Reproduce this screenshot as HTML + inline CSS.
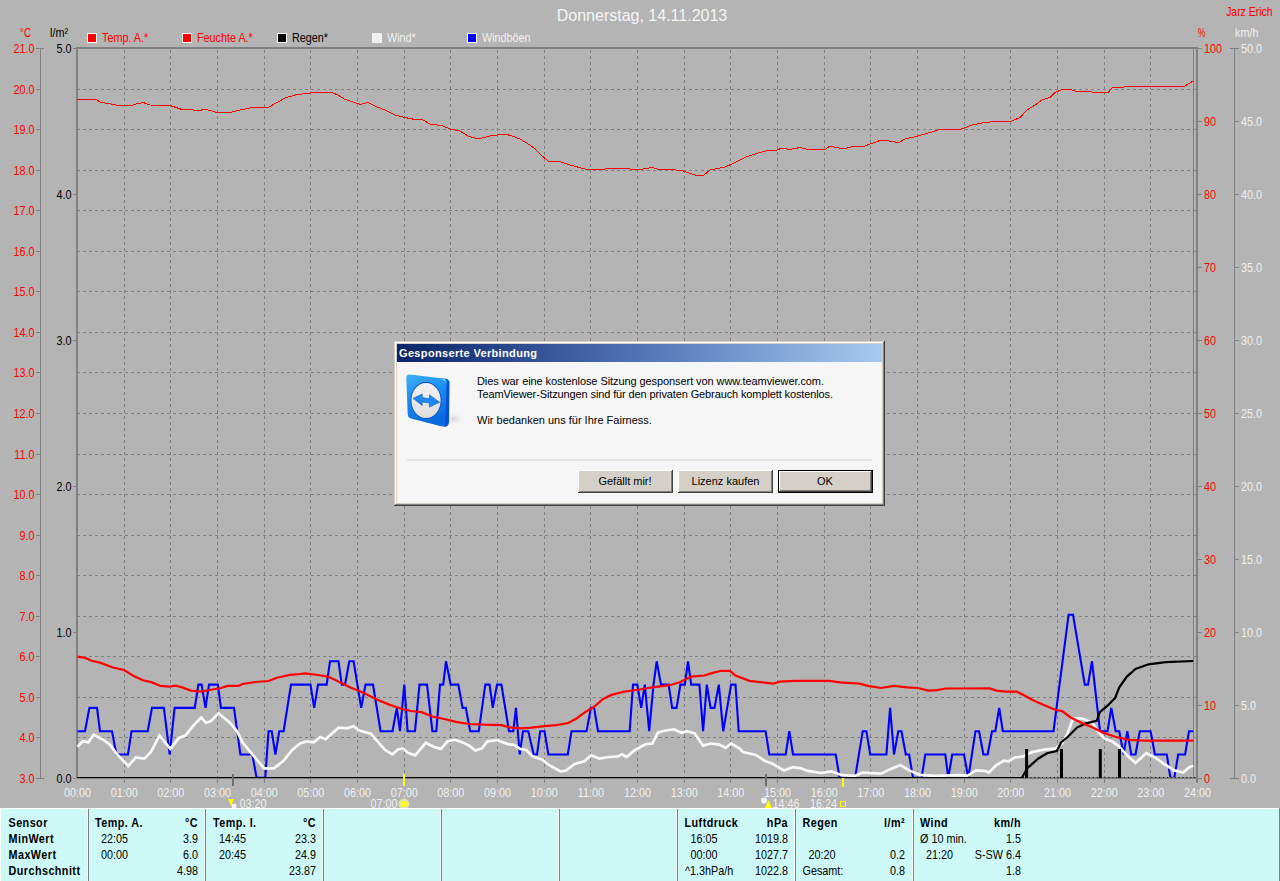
<!DOCTYPE html>
<html><head><meta charset="utf-8"><style>
html,body{margin:0;padding:0;background:#b4b4b4;}
svg{display:block;}
text{font-family:"Liberation Sans", sans-serif;}
</style></head><body>
<svg width="1280" height="881" viewBox="0 0 1280 881">
<rect x="0" y="0" width="1280" height="881" fill="#b4b4b4"/>
<path d="M78 89.5H1193 M78 129.5H1193 M78 170.5H1193 M78 210.5H1193 M78 251.5H1193 M78 291.5H1193 M78 332.5H1193 M78 372.5H1193 M78 413.5H1193 M78 454.5H1193 M78 494.5H1193 M78 535.5H1193 M78 575.5H1193 M78 616.5H1193 M78 656.5H1193 M78 697.5H1193 M78 737.5H1193" stroke="#808080" stroke-width="1" stroke-dasharray="3 3" stroke-dashoffset="1" fill="none"/>
<rect x="1194" y="89" width="2" height="1" fill="#808080"/><rect x="1194" y="129" width="2" height="1" fill="#808080"/><rect x="1194" y="170" width="2" height="1" fill="#808080"/><rect x="1194" y="210" width="2" height="1" fill="#808080"/><rect x="1194" y="251" width="2" height="1" fill="#808080"/><rect x="1194" y="291" width="2" height="1" fill="#808080"/><rect x="1194" y="332" width="2" height="1" fill="#808080"/><rect x="1194" y="372" width="2" height="1" fill="#808080"/><rect x="1194" y="413" width="2" height="1" fill="#808080"/><rect x="1194" y="454" width="2" height="1" fill="#808080"/><rect x="1194" y="494" width="2" height="1" fill="#808080"/><rect x="1194" y="535" width="2" height="1" fill="#808080"/><rect x="1194" y="575" width="2" height="1" fill="#808080"/><rect x="1194" y="616" width="2" height="1" fill="#808080"/><rect x="1194" y="656" width="2" height="1" fill="#808080"/><rect x="1194" y="697" width="2" height="1" fill="#808080"/><rect x="1194" y="737" width="2" height="1" fill="#808080"/>
<path d="M124.5 50V777 M124.5 779V783 M170.5 50V777 M170.5 779V783 M217.5 50V777 M217.5 779V783 M264.5 50V777 M264.5 779V783 M310.5 50V777 M310.5 779V783 M357.5 50V777 M357.5 779V783 M404.5 50V777 M404.5 779V783 M450.5 50V777 M450.5 779V783 M497.5 50V777 M497.5 779V783 M544.5 50V777 M544.5 779V783 M590.5 50V777 M590.5 779V783 M637.5 50V777 M637.5 779V783 M684.5 50V777 M684.5 779V783 M730.5 50V777 M730.5 779V783 M777.5 50V777 M777.5 779V783 M824.5 50V777 M824.5 779V783 M870.5 50V777 M870.5 779V783 M917.5 50V777 M917.5 779V783 M964.5 50V777 M964.5 779V783 M1010.5 50V777 M1010.5 779V783 M1057.5 50V777 M1057.5 779V783 M1104.5 50V777 M1104.5 779V783 M1150.5 50V777 M1150.5 779V783" stroke="#808080" stroke-width="1" stroke-dasharray="3 3" fill="none"/>
<rect x="124" y="779" width="1" height="4" fill="#808080"/><rect x="170" y="779" width="1" height="4" fill="#808080"/><rect x="217" y="779" width="1" height="4" fill="#808080"/><rect x="264" y="779" width="1" height="4" fill="#808080"/><rect x="310" y="779" width="1" height="4" fill="#808080"/><rect x="357" y="779" width="1" height="4" fill="#808080"/><rect x="404" y="779" width="1" height="4" fill="#808080"/><rect x="450" y="779" width="1" height="4" fill="#808080"/><rect x="497" y="779" width="1" height="4" fill="#808080"/><rect x="544" y="779" width="1" height="4" fill="#808080"/><rect x="590" y="779" width="1" height="4" fill="#808080"/><rect x="637" y="779" width="1" height="4" fill="#808080"/><rect x="684" y="779" width="1" height="4" fill="#808080"/><rect x="730" y="779" width="1" height="4" fill="#808080"/><rect x="777" y="779" width="1" height="4" fill="#808080"/><rect x="824" y="779" width="1" height="4" fill="#808080"/><rect x="870" y="779" width="1" height="4" fill="#808080"/><rect x="917" y="779" width="1" height="4" fill="#808080"/><rect x="964" y="779" width="1" height="4" fill="#808080"/><rect x="1010" y="779" width="1" height="4" fill="#808080"/><rect x="1057" y="779" width="1" height="4" fill="#808080"/><rect x="1104" y="779" width="1" height="4" fill="#808080"/><rect x="1150" y="779" width="1" height="4" fill="#808080"/>
<rect x="76" y="47" width="1122" height="2" fill="#808080"/>
<rect x="76" y="47" width="2" height="731" fill="#808080"/>
<rect x="1196" y="47" width="2" height="736" fill="#808080"/>
<rect x="1193" y="48" width="1" height="730" fill="#808080"/>
<rect x="40" y="48" width="1" height="731" fill="#808080"/>
<rect x="36" y="48" width="8" height="1" fill="#808080"/><rect x="36" y="89" width="4" height="1" fill="#808080"/><rect x="36" y="129" width="4" height="1" fill="#808080"/><rect x="36" y="170" width="4" height="1" fill="#808080"/><rect x="36" y="210" width="4" height="1" fill="#808080"/><rect x="36" y="251" width="4" height="1" fill="#808080"/><rect x="36" y="291" width="4" height="1" fill="#808080"/><rect x="36" y="332" width="4" height="1" fill="#808080"/><rect x="36" y="372" width="4" height="1" fill="#808080"/><rect x="36" y="413" width="4" height="1" fill="#808080"/><rect x="36" y="454" width="4" height="1" fill="#808080"/><rect x="36" y="494" width="4" height="1" fill="#808080"/><rect x="36" y="535" width="4" height="1" fill="#808080"/><rect x="36" y="575" width="4" height="1" fill="#808080"/><rect x="36" y="616" width="4" height="1" fill="#808080"/><rect x="36" y="656" width="4" height="1" fill="#808080"/><rect x="36" y="697" width="4" height="1" fill="#808080"/><rect x="36" y="737" width="4" height="1" fill="#808080"/><rect x="36" y="778" width="8" height="1" fill="#808080"/>
<rect x="1234" y="48" width="1" height="731" fill="#808080"/>
<rect x="73" y="48" width="3" height="1" fill="#808080"/><rect x="73" y="194" width="3" height="1" fill="#808080"/><rect x="73" y="340" width="3" height="1" fill="#808080"/><rect x="73" y="486" width="3" height="1" fill="#808080"/><rect x="73" y="632" width="3" height="1" fill="#808080"/><rect x="73" y="778" width="3" height="1" fill="#808080"/><rect x="1198" y="48" width="4" height="1" fill="#808080"/><rect x="1198" y="121" width="4" height="1" fill="#808080"/><rect x="1198" y="194" width="4" height="1" fill="#808080"/><rect x="1198" y="267" width="4" height="1" fill="#808080"/><rect x="1198" y="340" width="4" height="1" fill="#808080"/><rect x="1198" y="413" width="4" height="1" fill="#808080"/><rect x="1198" y="486" width="4" height="1" fill="#808080"/><rect x="1198" y="559" width="4" height="1" fill="#808080"/><rect x="1198" y="632" width="4" height="1" fill="#808080"/><rect x="1198" y="705" width="4" height="1" fill="#808080"/><rect x="1198" y="778" width="4" height="1" fill="#808080"/><rect x="1230" y="48" width="9" height="1" fill="#808080"/><rect x="1235" y="121" width="4" height="1" fill="#808080"/><rect x="1235" y="194" width="4" height="1" fill="#808080"/><rect x="1235" y="267" width="4" height="1" fill="#808080"/><rect x="1235" y="340" width="4" height="1" fill="#808080"/><rect x="1235" y="413" width="4" height="1" fill="#808080"/><rect x="1235" y="486" width="4" height="1" fill="#808080"/><rect x="1235" y="559" width="4" height="1" fill="#808080"/><rect x="1235" y="632" width="4" height="1" fill="#808080"/><rect x="1235" y="705" width="4" height="1" fill="#808080"/><rect x="1230" y="778" width="9" height="1" fill="#808080"/>
<text transform="translate(34.5 53) scale(0.9 1)" fill="#ff0000" font-size="12" font-weight="normal" text-anchor="end" >21.0</text><text transform="translate(34.5 94) scale(0.9 1)" fill="#ff0000" font-size="12" font-weight="normal" text-anchor="end" >20.0</text><text transform="translate(34.5 134) scale(0.9 1)" fill="#ff0000" font-size="12" font-weight="normal" text-anchor="end" >19.0</text><text transform="translate(34.5 175) scale(0.9 1)" fill="#ff0000" font-size="12" font-weight="normal" text-anchor="end" >18.0</text><text transform="translate(34.5 215) scale(0.9 1)" fill="#ff0000" font-size="12" font-weight="normal" text-anchor="end" >17.0</text><text transform="translate(34.5 256) scale(0.9 1)" fill="#ff0000" font-size="12" font-weight="normal" text-anchor="end" >16.0</text><text transform="translate(34.5 296) scale(0.9 1)" fill="#ff0000" font-size="12" font-weight="normal" text-anchor="end" >15.0</text><text transform="translate(34.5 337) scale(0.9 1)" fill="#ff0000" font-size="12" font-weight="normal" text-anchor="end" >14.0</text><text transform="translate(34.5 377) scale(0.9 1)" fill="#ff0000" font-size="12" font-weight="normal" text-anchor="end" >13.0</text><text transform="translate(34.5 418) scale(0.9 1)" fill="#ff0000" font-size="12" font-weight="normal" text-anchor="end" >12.0</text><text transform="translate(34.5 459) scale(0.9 1)" fill="#ff0000" font-size="12" font-weight="normal" text-anchor="end" >11.0</text><text transform="translate(34.5 499) scale(0.9 1)" fill="#ff0000" font-size="12" font-weight="normal" text-anchor="end" >10.0</text><text transform="translate(34.5 540) scale(0.9 1)" fill="#ff0000" font-size="12" font-weight="normal" text-anchor="end" >9.0</text><text transform="translate(34.5 580) scale(0.9 1)" fill="#ff0000" font-size="12" font-weight="normal" text-anchor="end" >8.0</text><text transform="translate(34.5 621) scale(0.9 1)" fill="#ff0000" font-size="12" font-weight="normal" text-anchor="end" >7.0</text><text transform="translate(34.5 661) scale(0.9 1)" fill="#ff0000" font-size="12" font-weight="normal" text-anchor="end" >6.0</text><text transform="translate(34.5 702) scale(0.9 1)" fill="#ff0000" font-size="12" font-weight="normal" text-anchor="end" >5.0</text><text transform="translate(34.5 742) scale(0.9 1)" fill="#ff0000" font-size="12" font-weight="normal" text-anchor="end" >4.0</text><text transform="translate(34.5 783) scale(0.9 1)" fill="#ff0000" font-size="12" font-weight="normal" text-anchor="end" >3.0</text><text transform="translate(71.5 53) scale(0.9 1)" fill="#000000" font-size="12" font-weight="normal" text-anchor="end" >5.0</text><text transform="translate(71.5 199) scale(0.9 1)" fill="#000000" font-size="12" font-weight="normal" text-anchor="end" >4.0</text><text transform="translate(71.5 345) scale(0.9 1)" fill="#000000" font-size="12" font-weight="normal" text-anchor="end" >3.0</text><text transform="translate(71.5 491) scale(0.9 1)" fill="#000000" font-size="12" font-weight="normal" text-anchor="end" >2.0</text><text transform="translate(71.5 637) scale(0.9 1)" fill="#000000" font-size="12" font-weight="normal" text-anchor="end" >1.0</text><text transform="translate(71.5 783) scale(0.9 1)" fill="#000000" font-size="12" font-weight="normal" text-anchor="end" >0.0</text><text transform="translate(1204 53) scale(0.9 1)" fill="#ff0000" font-size="12" font-weight="normal" text-anchor="start" >100</text><text transform="translate(1241 53) scale(0.9 1)" fill="#f0f0f0" font-size="12" font-weight="normal" text-anchor="start" >50.0</text><text transform="translate(1204 126) scale(0.9 1)" fill="#ff0000" font-size="12" font-weight="normal" text-anchor="start" >90</text><text transform="translate(1241 126) scale(0.9 1)" fill="#f0f0f0" font-size="12" font-weight="normal" text-anchor="start" >45.0</text><text transform="translate(1204 199) scale(0.9 1)" fill="#ff0000" font-size="12" font-weight="normal" text-anchor="start" >80</text><text transform="translate(1241 199) scale(0.9 1)" fill="#f0f0f0" font-size="12" font-weight="normal" text-anchor="start" >40.0</text><text transform="translate(1204 272) scale(0.9 1)" fill="#ff0000" font-size="12" font-weight="normal" text-anchor="start" >70</text><text transform="translate(1241 272) scale(0.9 1)" fill="#f0f0f0" font-size="12" font-weight="normal" text-anchor="start" >35.0</text><text transform="translate(1204 345) scale(0.9 1)" fill="#ff0000" font-size="12" font-weight="normal" text-anchor="start" >60</text><text transform="translate(1241 345) scale(0.9 1)" fill="#f0f0f0" font-size="12" font-weight="normal" text-anchor="start" >30.0</text><text transform="translate(1204 418) scale(0.9 1)" fill="#ff0000" font-size="12" font-weight="normal" text-anchor="start" >50</text><text transform="translate(1241 418) scale(0.9 1)" fill="#f0f0f0" font-size="12" font-weight="normal" text-anchor="start" >25.0</text><text transform="translate(1204 491) scale(0.9 1)" fill="#ff0000" font-size="12" font-weight="normal" text-anchor="start" >40</text><text transform="translate(1241 491) scale(0.9 1)" fill="#f0f0f0" font-size="12" font-weight="normal" text-anchor="start" >20.0</text><text transform="translate(1204 564) scale(0.9 1)" fill="#ff0000" font-size="12" font-weight="normal" text-anchor="start" >30</text><text transform="translate(1241 564) scale(0.9 1)" fill="#f0f0f0" font-size="12" font-weight="normal" text-anchor="start" >15.0</text><text transform="translate(1204 637) scale(0.9 1)" fill="#ff0000" font-size="12" font-weight="normal" text-anchor="start" >20</text><text transform="translate(1241 637) scale(0.9 1)" fill="#f0f0f0" font-size="12" font-weight="normal" text-anchor="start" >10.0</text><text transform="translate(1204 710) scale(0.9 1)" fill="#ff0000" font-size="12" font-weight="normal" text-anchor="start" >10</text><text transform="translate(1241 710) scale(0.9 1)" fill="#f0f0f0" font-size="12" font-weight="normal" text-anchor="start" >5.0</text><text transform="translate(1204 783) scale(0.9 1)" fill="#ff0000" font-size="12" font-weight="normal" text-anchor="start" >0</text><text transform="translate(1241 783) scale(0.9 1)" fill="#f0f0f0" font-size="12" font-weight="normal" text-anchor="start" >0.0</text><text transform="translate(20 37) scale(0.82 1)" fill="#ff0000" font-size="12" font-weight="normal" text-anchor="start" >°C</text><text transform="translate(50 37) scale(0.9 1)" fill="#000000" font-size="12" font-weight="normal" text-anchor="start" >l/m²</text><text transform="translate(1198 37) scale(0.7 1)" fill="#ff0000" font-size="12" font-weight="normal" text-anchor="start" >%</text><text transform="translate(1235 37) scale(0.9 1)" fill="#f0f0f0" font-size="12" font-weight="normal" text-anchor="start" >km/h</text><text transform="translate(1272.5 16) scale(0.87 1)" fill="#ff0000" font-size="12" font-weight="normal" text-anchor="end" >Jarz Erich</text><text transform="translate(642 21) scale(1 1)" fill="#f4f4f4" font-size="16" font-weight="normal" text-anchor="middle" >Donnerstag, 14.11.2013</text><text transform="translate(77.5 797) scale(0.9 1)" fill="#f0f0f0" font-size="12" font-weight="normal" text-anchor="middle" >00:00</text><text transform="translate(124.167 797) scale(0.9 1)" fill="#f0f0f0" font-size="12" font-weight="normal" text-anchor="middle" >01:00</text><text transform="translate(170.834 797) scale(0.9 1)" fill="#f0f0f0" font-size="12" font-weight="normal" text-anchor="middle" >02:00</text><text transform="translate(217.501 797) scale(0.9 1)" fill="#f0f0f0" font-size="12" font-weight="normal" text-anchor="middle" >03:00</text><text transform="translate(264.168 797) scale(0.9 1)" fill="#f0f0f0" font-size="12" font-weight="normal" text-anchor="middle" >04:00</text><text transform="translate(310.83500000000004 797) scale(0.9 1)" fill="#f0f0f0" font-size="12" font-weight="normal" text-anchor="middle" >05:00</text><text transform="translate(357.502 797) scale(0.9 1)" fill="#f0f0f0" font-size="12" font-weight="normal" text-anchor="middle" >06:00</text><text transform="translate(404.169 797) scale(0.9 1)" fill="#f0f0f0" font-size="12" font-weight="normal" text-anchor="middle" >07:00</text><text transform="translate(450.836 797) scale(0.9 1)" fill="#f0f0f0" font-size="12" font-weight="normal" text-anchor="middle" >08:00</text><text transform="translate(497.50300000000004 797) scale(0.9 1)" fill="#f0f0f0" font-size="12" font-weight="normal" text-anchor="middle" >09:00</text><text transform="translate(544.1700000000001 797) scale(0.9 1)" fill="#f0f0f0" font-size="12" font-weight="normal" text-anchor="middle" >10:00</text><text transform="translate(590.837 797) scale(0.9 1)" fill="#f0f0f0" font-size="12" font-weight="normal" text-anchor="middle" >11:00</text><text transform="translate(637.504 797) scale(0.9 1)" fill="#f0f0f0" font-size="12" font-weight="normal" text-anchor="middle" >12:00</text><text transform="translate(684.171 797) scale(0.9 1)" fill="#f0f0f0" font-size="12" font-weight="normal" text-anchor="middle" >13:00</text><text transform="translate(730.838 797) scale(0.9 1)" fill="#f0f0f0" font-size="12" font-weight="normal" text-anchor="middle" >14:00</text><text transform="translate(777.505 797) scale(0.9 1)" fill="#f0f0f0" font-size="12" font-weight="normal" text-anchor="middle" >15:00</text><text transform="translate(824.172 797) scale(0.9 1)" fill="#f0f0f0" font-size="12" font-weight="normal" text-anchor="middle" >16:00</text><text transform="translate(870.839 797) scale(0.9 1)" fill="#f0f0f0" font-size="12" font-weight="normal" text-anchor="middle" >17:00</text><text transform="translate(917.5060000000001 797) scale(0.9 1)" fill="#f0f0f0" font-size="12" font-weight="normal" text-anchor="middle" >18:00</text><text transform="translate(964.173 797) scale(0.9 1)" fill="#f0f0f0" font-size="12" font-weight="normal" text-anchor="middle" >19:00</text><text transform="translate(1010.84 797) scale(0.9 1)" fill="#f0f0f0" font-size="12" font-weight="normal" text-anchor="middle" >20:00</text><text transform="translate(1057.507 797) scale(0.9 1)" fill="#f0f0f0" font-size="12" font-weight="normal" text-anchor="middle" >21:00</text><text transform="translate(1104.174 797) scale(0.9 1)" fill="#f0f0f0" font-size="12" font-weight="normal" text-anchor="middle" >22:00</text><text transform="translate(1150.8410000000001 797) scale(0.9 1)" fill="#f0f0f0" font-size="12" font-weight="normal" text-anchor="middle" >23:00</text><text transform="translate(1197.508 797) scale(0.9 1)" fill="#f0f0f0" font-size="12" font-weight="normal" text-anchor="middle" >24:00</text><rect x="87" y="33" width="10" height="10" fill="#ffffff"/><rect x="88" y="34" width="8" height="8" fill="#ff0000"/><text transform="translate(102 42) scale(0.9 1)" fill="#ff0000" font-size="12" font-weight="normal" text-anchor="start" >Temp. A.*</text><rect x="182" y="33" width="10" height="10" fill="#ffffff"/><rect x="183" y="34" width="8" height="8" fill="#ff0000"/><text transform="translate(197 42) scale(0.9 1)" fill="#ff0000" font-size="12" font-weight="normal" text-anchor="start" >Feuchte A.*</text><rect x="277" y="33" width="10" height="10" fill="#ffffff"/><rect x="278" y="34" width="8" height="8" fill="#000000"/><text transform="translate(292 42) scale(0.9 1)" fill="#000000" font-size="12" font-weight="normal" text-anchor="start" >Regen*</text><rect x="372" y="33" width="10" height="10" fill="#f0f0f0"/><text transform="translate(387 42) scale(0.9 1)" fill="#f0f0f0" font-size="12" font-weight="normal" text-anchor="start" >Wind*</text><rect x="467" y="33" width="10" height="10" fill="#ffffff"/><rect x="468" y="34" width="8" height="8" fill="#0000ff"/><text transform="translate(482 42) scale(0.9 1)" fill="#f0f0f0" font-size="12" font-weight="normal" text-anchor="start" >Windböen</text>
<path d="M77.0 99.5 L96.0 99.5 L100.0 102.0 L116.0 105.0 L130.0 106.0 L136.0 104.0 L143.0 102.5 L150.0 105.0 L170.0 105.5 L182.0 109.5 L190.0 109.5 L198.0 111.0 L205.0 109.0 L215.0 112.0 L228.0 113.0 L240.0 110.0 L250.0 108.0 L268.0 107.5 L277.0 102.5 L285.0 98.0 L295.0 95.0 L310.0 93.0 L332.0 92.5 L338.0 95.0 L345.0 99.5 L355.0 102.5 L360.0 104.5 L368.0 102.5 L377.0 107.0 L385.0 110.0 L395.0 115.0 L405.0 117.5 L415.0 119.5 L422.0 119.5 L430.0 124.0 L443.0 126.0 L450.0 129.0 L460.0 131.0 L468.0 136.0 L478.0 139.0 L490.0 136.0 L505.0 134.0 L512.0 136.0 L520.0 139.0 L530.0 145.0 L535.0 149.0 L540.0 154.0 L548.0 161.0 L558.0 161.0 L570.0 165.0 L585.0 169.0 L600.0 170.0 L610.0 168.0 L640.0 169.5 L652.0 167.5 L660.0 170.0 L672.0 169.5 L683.0 171.0 L695.0 175.0 L703.0 176.0 L710.0 170.0 L725.0 167.0 L735.0 162.5 L745.0 157.5 L755.0 154.0 L760.0 152.5 L770.0 150.0 L777.0 150.0 L782.0 148.0 L790.0 149.5 L800.0 147.5 L808.0 149.5 L825.0 149.5 L830.0 146.0 L843.0 149.0 L855.0 146.0 L865.0 146.0 L870.0 144.0 L880.0 140.5 L883.0 140.0 L895.0 142.0 L900.0 142.0 L905.0 139.0 L918.0 136.0 L930.0 132.5 L940.0 129.5 L960.0 129.5 L972.0 125.0 L985.0 122.5 L1000.0 121.0 L1012.0 121.0 L1020.0 117.5 L1027.0 110.0 L1035.0 105.0 L1042.0 100.0 L1050.0 97.5 L1055.0 92.5 L1062.0 89.5 L1070.0 89.5 L1075.0 91.0 L1100.0 92.5 L1108.0 92.5 L1112.0 88.0 L1137.0 86.0 L1185.0 86.0 L1193.0 81.0" stroke="#ff0000" stroke-width="1" fill="none" stroke-linejoin="miter" stroke-linecap="butt" shape-rendering="crispEdges"/>
<path d="M77.5 731.2 L85.0 731.2 L89.4 707.9 L97.0 707.9 L100.0 731.2 L112.0 731.2 L116.4 754.5 L128.0 754.5 L131.5 731.2 L147.7 731.2 L152.0 707.9 L163.9 707.9 L169.7 754.5 L174.6 707.9 L194.7 707.9 L198.4 684.6 L201.6 684.6 L205.5 707.9 L209.0 684.6 L217.8 684.6 L221.0 707.9 L234.0 707.9 L240.4 754.5 L252.3 754.5 L256.6 777.8 L265.3 777.8 L268.5 731.2 L271.7 731.2 L275.4 754.5 L279.3 731.2 L283.6 731.2 L291.0 684.6 L310.5 684.6 L314.2 707.9 L318.0 684.6 L326.7 684.6 L330.0 661.3 L338.5 661.3 L341.8 684.6 L345.0 684.6 L349.3 661.3 L353.6 661.3 L361.2 707.9 L365.5 684.6 L373.0 684.6 L380.6 731.2 L392.5 731.2 L396.8 707.9 L400.0 731.2 L404.3 684.6 L407.6 731.2 L415.0 731.2 L419.5 684.6 L427.0 684.6 L432.4 731.2 L436.3 731.2 L440.0 684.6 L443.2 684.6 L446.0 661.3 L450.7 684.6 L458.3 684.6 L462.6 707.9 L465.8 707.9 L470.2 731.2 L478.8 731.2 L485.3 684.6 L489.6 684.6 L492.8 707.9 L497.0 684.6 L501.4 684.6 L509.0 731.2 L513.3 731.2 L516.0 707.9 L519.7 754.5 L523.0 731.2 L528.3 731.2 L533.7 754.5 L537.0 754.5 L540.2 731.2 L544.5 731.2 L548.4 754.5 L567.8 754.5 L571.5 731.2 L586.6 731.2 L590.9 707.9 L594.1 707.9 L598.0 731.2 L629.7 731.2 L633.0 684.6 L637.3 684.6 L641.2 707.9 L644.8 684.6 L649.2 731.2 L653.5 684.6 L656.7 661.3 L661.0 684.6 L668.6 684.6 L672.2 707.9 L676.6 707.9 L680.4 684.6 L684.8 684.6 L688.0 661.3 L691.2 684.6 L699.4 684.6 L703.1 731.2 L706.8 684.6 L710.6 707.9 L714.5 707.9 L718.8 684.6 L723.2 731.2 L731.1 684.6 L735.5 684.6 L738.7 731.2 L765.6 731.2 L769.3 754.5 L785.7 754.5 L789.3 731.2 L793.0 754.5 L835.7 754.5 L839.6 777.8 L855.1 777.8 L862.7 731.2 L866.4 731.2 L870.2 754.5 L886.4 754.5 L890.1 707.9 L894.0 754.5 L898.3 731.2 L901.5 731.2 L905.8 754.5 L909.1 754.5 L913.0 777.8 L921.6 777.8 L925.3 754.5 L945.3 754.5 L948.3 777.8 L952.2 754.5 L964.0 754.5 L968.3 777.8 L975.5 731.2 L979.1 731.2 L983.4 754.5 L987.7 754.5 L992.0 731.2 L995.3 731.2 L999.2 707.9 L1002.8 731.2 L1053.5 731.2 L1068.6 614.7 L1073.0 614.7 L1084.8 684.6 L1088.0 684.6 L1092.0 661.3 L1100.0 731.2 L1107.5 731.2 L1111.3 707.9 L1115.7 731.2 L1119.3 731.2 L1123.6 754.5 L1127.3 731.2 L1131.2 754.5 L1135.5 754.5 L1139.8 731.2 L1150.6 731.2 L1154.9 754.5 L1166.8 754.5 L1170.4 777.8 L1174.3 777.8 L1178.2 754.5 L1185.1 754.5 L1189.0 731.2 L1193.3 731.2" stroke="#0000ff" stroke-width="2.1" fill="none" stroke-linejoin="miter" stroke-linecap="butt" />
<path d="M77.5 746.7 L83.0 741.3 L88.3 742.4 L93.7 734.8 L102.4 739.2 L110.0 744.6 L116.4 753.6 L128.3 766.0 L135.8 757.5 L144.4 758.6 L150.9 752.0 L159.5 735.5 L170.3 748.9 L179.0 738.0 L185.4 735.5 L193.0 726.0 L201.2 717.6 L206.0 723.0 L211.3 720.8 L218.4 713.3 L229.7 722.5 L237.2 731.6 L242.6 742.4 L251.2 753.2 L264.2 768.3 L273.9 768.3 L283.6 760.7 L292.2 750.0 L300.0 743.5 L307.3 741.3 L313.7 742.4 L320.2 737.0 L325.6 739.2 L338.5 727.7 L347.2 728.4 L353.6 726.2 L359.0 730.5 L371.0 733.8 L376.3 740.2 L385.0 750.0 L392.5 754.3 L397.9 749.5 L403.3 748.4 L407.6 752.7 L415.1 755.3 L425.9 742.8 L433.5 746.7 L441.0 748.9 L447.5 741.3 L455.0 739.8 L462.6 742.4 L469.0 745.6 L475.5 750.6 L482.0 748.4 L487.4 741.3 L497.1 740.2 L507.9 744.1 L514.4 745.0 L520.0 748.9 L526.2 750.0 L532.7 756.4 L542.4 759.7 L548.8 765.0 L560.7 771.5 L566.1 770.4 L574.7 764.0 L584.4 761.4 L590.9 755.3 L599.5 758.6 L609.2 757.0 L617.9 756.4 L622.2 754.3 L626.5 757.0 L635.1 750.0 L645.9 744.1 L652.4 743.5 L657.8 732.7 L665.3 730.5 L674.0 729.4 L681.5 732.7 L686.9 731.2 L694.5 733.3 L703.1 745.6 L710.6 743.5 L719.3 744.6 L725.7 747.8 L731.1 743.5 L740.0 748.9 L743.0 752.1 L755.9 754.9 L764.5 760.7 L773.1 764.0 L783.9 770.4 L792.6 767.2 L801.2 768.3 L807.7 770.9 L820.6 773.0 L831.4 771.5 L842.2 775.2 L855.1 775.8 L862.7 772.6 L881.0 773.7 L889.7 769.4 L900.4 765.0 L909.1 770.4 L919.9 774.8 L935.0 775.8 L960.0 775.2 L967.3 775.8 L975.9 770.4 L984.5 770.8 L988.8 772.6 L996.4 765.0 L1003.9 760.7 L1008.2 761.3 L1014.7 757.5 L1023.3 756.4 L1032.0 752.1 L1042.8 749.9 L1055.7 748.4 L1062.2 743.4 L1067.6 733.7 L1073.0 718.6 L1079.4 718.2 L1085.9 719.7 L1092.4 723.0 L1098.8 732.7 L1105.3 739.1 L1111.8 741.3 L1118.2 745.6 L1126.9 755.3 L1135.5 762.9 L1146.3 753.2 L1154.9 757.5 L1165.7 765.0 L1174.3 770.4 L1183.0 772.6 L1189.4 767.2 L1193.3 765.7" stroke="#f8f8f8" stroke-width="2.7" fill="none" stroke-linejoin="miter" stroke-linecap="butt" />
<rect x="77" y="777" width="1120" height="2" fill="#808080"/><rect x="77" y="777" width="947" height="1" fill="#000000"/>
<rect x="1026.5" y="777" width="1" height="1" fill="#000"/><rect x="1030.4" y="777" width="1" height="1" fill="#000"/><rect x="1034.3" y="777" width="1" height="1" fill="#000"/><rect x="1038.2" y="777" width="1" height="1" fill="#000"/><rect x="1042.1" y="777" width="1" height="1" fill="#000"/><rect x="1046.0" y="777" width="1" height="1" fill="#000"/><rect x="1049.9" y="777" width="1" height="1" fill="#000"/><rect x="1053.8" y="777" width="1" height="1" fill="#000"/><rect x="1057.7" y="777" width="1" height="1" fill="#000"/><rect x="1061.6" y="777" width="1" height="1" fill="#000"/><rect x="1065.5" y="777" width="1" height="1" fill="#000"/><rect x="1069.4" y="777" width="1" height="1" fill="#000"/><rect x="1073.3" y="777" width="1" height="1" fill="#000"/><rect x="1077.2" y="777" width="1" height="1" fill="#000"/><rect x="1081.1" y="777" width="1" height="1" fill="#000"/><rect x="1085.0" y="777" width="1" height="1" fill="#000"/><rect x="1088.9" y="777" width="1" height="1" fill="#000"/><rect x="1092.8" y="777" width="1" height="1" fill="#000"/><rect x="1096.7" y="777" width="1" height="1" fill="#000"/><rect x="1100.6" y="777" width="1" height="1" fill="#000"/><rect x="1104.5" y="777" width="1" height="1" fill="#000"/><rect x="1108.4" y="777" width="1" height="1" fill="#000"/><rect x="1112.3" y="777" width="1" height="1" fill="#000"/><rect x="1116.2" y="777" width="1" height="1" fill="#000"/><rect x="1120.1" y="777" width="1" height="1" fill="#000"/><rect x="1124.0" y="777" width="1" height="1" fill="#000"/><rect x="1127.9" y="777" width="1" height="1" fill="#000"/><rect x="1131.8" y="777" width="1" height="1" fill="#000"/><rect x="1135.7" y="777" width="1" height="1" fill="#000"/><rect x="1139.6" y="777" width="1" height="1" fill="#000"/><rect x="1143.5" y="777" width="1" height="1" fill="#000"/><rect x="1147.4" y="777" width="1" height="1" fill="#000"/><rect x="1151.3" y="777" width="1" height="1" fill="#000"/><rect x="1155.2" y="777" width="1" height="1" fill="#000"/><rect x="1159.1" y="777" width="1" height="1" fill="#000"/><rect x="1163.0" y="777" width="1" height="1" fill="#000"/><rect x="1166.9" y="777" width="1" height="1" fill="#000"/><rect x="1170.8" y="777" width="1" height="1" fill="#000"/><rect x="1174.7" y="777" width="1" height="1" fill="#000"/><rect x="1178.6" y="777" width="1" height="1" fill="#000"/><rect x="1182.5" y="777" width="1" height="1" fill="#000"/><rect x="1186.4" y="777" width="1" height="1" fill="#000"/><rect x="1190.3" y="777" width="1" height="1" fill="#000"/><rect x="1194.2" y="777" width="1" height="1" fill="#000"/>
<path d="M1022.0 777.5 L1027.7 767.8 L1038.4 758.5 L1047.1 753.2 L1056.8 751.0 L1061.1 742.4 L1067.6 737.0 L1077.3 727.3 L1085.9 723.4 L1096.7 720.8 L1099.9 712.2 L1107.5 705.7 L1115.0 698.1 L1119.3 687.4 L1126.9 676.6 L1135.5 669.0 L1148.5 664.3 L1165.7 662.1 L1193.3 661.0" stroke="#000000" stroke-width="2.2" fill="none" stroke-linejoin="miter" stroke-linecap="butt" />
<rect x="1025.1" y="749" width="3" height="29" fill="#000"/>
<rect x="1060.0" y="749" width="3" height="29" fill="#000"/>
<rect x="1098.8" y="749" width="3" height="29" fill="#000"/>
<rect x="1118.0" y="749" width="3" height="29" fill="#000"/>
<path d="M77.5 656.7 L85.0 657.8 L91.6 660.8 L100.0 662.6 L113.0 667.5 L124.0 670.0 L134.7 676.6 L143.0 680.3 L152.0 682.4 L160.6 685.9 L169.2 686.7 L175.7 685.7 L182.2 687.4 L190.8 690.6 L201.6 691.7 L212.4 689.5 L221.0 688.0 L227.5 685.9 L238.3 685.9 L242.6 684.0 L255.5 682.0 L268.5 681.0 L277.0 677.7 L290.0 674.9 L300.0 674.0 L305.0 673.4 L318.0 675.0 L327.8 676.6 L337.5 681.0 L350.4 687.4 L363.4 692.8 L376.3 699.2 L389.2 704.6 L402.2 709.0 L410.8 711.0 L421.6 712.2 L432.4 716.5 L445.3 719.3 L456.1 721.9 L469.0 724.0 L484.2 724.7 L501.4 725.1 L510.0 727.3 L520.8 728.4 L531.6 727.7 L544.5 726.2 L556.4 725.1 L568.3 723.0 L576.9 718.2 L585.5 711.8 L594.1 706.8 L602.8 699.2 L611.4 694.9 L624.3 691.7 L639.4 689.5 L652.4 687.4 L669.7 685.2 L680.4 682.0 L691.2 676.6 L704.2 675.5 L712.8 672.9 L721.4 670.8 L730.0 670.8 L735.5 675.5 L749.4 680.9 L762.4 682.4 L773.1 683.7 L779.6 681.6 L794.7 680.9 L829.2 680.9 L840.0 682.4 L859.4 683.7 L868.1 685.9 L881.0 688.0 L894.0 685.9 L906.9 687.4 L917.7 688.0 L928.5 690.6 L937.1 690.2 L945.7 688.5 L960.0 688.5 L989.9 688.4 L996.4 690.6 L1006.0 691.7 L1016.9 691.7 L1025.5 696.0 L1032.0 699.7 L1042.8 704.6 L1055.7 710.0 L1062.2 711.1 L1070.8 717.6 L1081.6 723.0 L1092.4 727.3 L1103.2 732.7 L1116.1 737.0 L1129.0 739.8 L1144.1 740.6 L1193.3 740.6" stroke="#ff0000" stroke-width="2.2" fill="none" stroke-linejoin="miter" stroke-linecap="butt" />
<rect x="232" y="774" width="2" height="12" fill="#6e6e6e"/>
<rect x="765" y="774" width="2" height="12" fill="#6e6e6e"/>
<rect x="403" y="774" width="2" height="12" fill="#ffff00"/>
<rect x="842" y="778" width="2" height="9" fill="#ffff00"/>
<text transform="translate(239.5 808) scale(0.9 1)" fill="#f0f0f0" font-size="12" text-anchor="start">03:20</text>
<text transform="translate(370.5 808) scale(0.9 1)" fill="#f0f0f0" font-size="12" text-anchor="start">07:00</text>
<text transform="translate(772.5 808) scale(0.9 1)" fill="#f0f0f0" font-size="12" text-anchor="start">14:46</text>
<text transform="translate(810 808) scale(0.9 1)" fill="#f0f0f0" font-size="12" text-anchor="start">16:24</text>
<path d="M228 799 L234 799 L231 806 Z" fill="#ffff00"/><circle cx="234" cy="806" r="2.5" fill="#f0f0f0"/>
<circle cx="404" cy="804" r="5.5" fill="#ffffa0" opacity="0.6"/><circle cx="404" cy="804" r="3" fill="#ffff00"/>
<circle cx="764" cy="800.5" r="3" fill="#f0f0f0"/><path d="M765 808 L768.5 800 L772 808 Z" fill="#ffff00"/>
<rect x="840.5" y="801.5" width="5" height="5" fill="none" stroke="#ffff00" stroke-width="1"/>
<rect x="0" y="808" width="1280" height="73" fill="#cdfaf6"/>
<rect x="0" y="808" width="1279" height="1" fill="#ffffff"/>
<rect x="0" y="808" width="1" height="73" fill="#ffffff"/>
<rect x="1279" y="808" width="1" height="73" fill="#808080"/>
<rect x="87" y="809" width="1" height="72" fill="#ffffff"/><rect x="88" y="809" width="1" height="72" fill="#808080"/>
<rect x="204" y="809" width="1" height="72" fill="#ffffff"/><rect x="205" y="809" width="1" height="72" fill="#808080"/>
<rect x="322" y="809" width="1" height="72" fill="#ffffff"/><rect x="323" y="809" width="1" height="72" fill="#808080"/>
<rect x="440" y="809" width="1" height="72" fill="#ffffff"/><rect x="441" y="809" width="1" height="72" fill="#808080"/>
<rect x="558" y="809" width="1" height="72" fill="#ffffff"/><rect x="559" y="809" width="1" height="72" fill="#808080"/>
<rect x="676" y="809" width="1" height="72" fill="#ffffff"/><rect x="677" y="809" width="1" height="72" fill="#808080"/>
<rect x="794" y="809" width="1" height="72" fill="#ffffff"/><rect x="795" y="809" width="1" height="72" fill="#808080"/>
<rect x="912" y="809" width="1" height="72" fill="#ffffff"/><rect x="913" y="809" width="1" height="72" fill="#808080"/>
<text transform="translate(8.5 827) scale(0.9 1)" fill="#000" font-size="12" font-weight="bold" text-anchor="start" letter-spacing="0.5">Sensor</text>
<text transform="translate(8.5 843) scale(0.9 1)" fill="#000" font-size="12" font-weight="bold" text-anchor="start" letter-spacing="0.5">MinWert</text>
<text transform="translate(8.5 859) scale(0.9 1)" fill="#000" font-size="12" font-weight="bold" text-anchor="start" letter-spacing="0.5">MaxWert</text>
<text transform="translate(8.5 875) scale(0.9 1)" fill="#000" font-size="12" font-weight="bold" text-anchor="start" letter-spacing="0.5">Durchschnitt</text>
<text transform="translate(95 827) scale(0.9 1)" fill="#000" font-size="12" font-weight="bold" text-anchor="start" letter-spacing="0.5">Temp. A.</text>
<text transform="translate(198 827) scale(0.9 1)" fill="#000" font-size="12" font-weight="bold" text-anchor="end" letter-spacing="0.5">°C</text>
<text transform="translate(101 843) scale(0.9 1)" fill="#000" font-size="12" font-weight="normal" text-anchor="start">22:05</text>
<text transform="translate(198 843) scale(0.9 1)" fill="#000" font-size="12" font-weight="normal" text-anchor="end">3.9</text>
<text transform="translate(101 859) scale(0.9 1)" fill="#000" font-size="12" font-weight="normal" text-anchor="start">00:00</text>
<text transform="translate(198 859) scale(0.9 1)" fill="#000" font-size="12" font-weight="normal" text-anchor="end">6.0</text>
<text transform="translate(198 875) scale(0.9 1)" fill="#000" font-size="12" font-weight="normal" text-anchor="end">4.98</text>
<text transform="translate(213 827) scale(0.9 1)" fill="#000" font-size="12" font-weight="bold" text-anchor="start" letter-spacing="0.5">Temp. I.</text>
<text transform="translate(316 827) scale(0.9 1)" fill="#000" font-size="12" font-weight="bold" text-anchor="end" letter-spacing="0.5">°C</text>
<text transform="translate(219 843) scale(0.9 1)" fill="#000" font-size="12" font-weight="normal" text-anchor="start">14:45</text>
<text transform="translate(316 843) scale(0.9 1)" fill="#000" font-size="12" font-weight="normal" text-anchor="end">23.3</text>
<text transform="translate(219 859) scale(0.9 1)" fill="#000" font-size="12" font-weight="normal" text-anchor="start">20:45</text>
<text transform="translate(316 859) scale(0.9 1)" fill="#000" font-size="12" font-weight="normal" text-anchor="end">24.9</text>
<text transform="translate(316 875) scale(0.9 1)" fill="#000" font-size="12" font-weight="normal" text-anchor="end">23.87</text>
<text transform="translate(684.5 827) scale(0.9 1)" fill="#000" font-size="12" font-weight="bold" text-anchor="start" letter-spacing="0.5">Luftdruck</text>
<text transform="translate(788 827) scale(0.9 1)" fill="#000" font-size="12" font-weight="bold" text-anchor="end" letter-spacing="0.5">hPa</text>
<text transform="translate(690.5 843) scale(0.9 1)" fill="#000" font-size="12" font-weight="normal" text-anchor="start">16:05</text>
<text transform="translate(788 843) scale(0.9 1)" fill="#000" font-size="12" font-weight="normal" text-anchor="end">1019.8</text>
<text transform="translate(690.5 859) scale(0.9 1)" fill="#000" font-size="12" font-weight="normal" text-anchor="start">00:00</text>
<text transform="translate(788 859) scale(0.9 1)" fill="#000" font-size="12" font-weight="normal" text-anchor="end">1027.7</text>
<text transform="translate(685 875) scale(0.9 1)" fill="#000" font-size="12" font-weight="normal" text-anchor="start">^1.3hPa/h</text>
<text transform="translate(788 875) scale(0.9 1)" fill="#000" font-size="12" font-weight="normal" text-anchor="end">1022.8</text>
<text transform="translate(802.5 827) scale(0.9 1)" fill="#000" font-size="12" font-weight="bold" text-anchor="start" letter-spacing="0.5">Regen</text>
<text transform="translate(905 827) scale(0.9 1)" fill="#000" font-size="12" font-weight="bold" text-anchor="end" letter-spacing="0.5">l/m²</text>
<text transform="translate(808.5 859) scale(0.9 1)" fill="#000" font-size="12" font-weight="normal" text-anchor="start">20:20</text>
<text transform="translate(905 859) scale(0.9 1)" fill="#000" font-size="12" font-weight="normal" text-anchor="end">0.2</text>
<text transform="translate(802.5 875) scale(0.9 1)" fill="#000" font-size="12" font-weight="normal" text-anchor="start">Gesamt:</text>
<text transform="translate(905 875) scale(0.9 1)" fill="#000" font-size="12" font-weight="normal" text-anchor="end">0.8</text>
<text transform="translate(920 827) scale(0.9 1)" fill="#000" font-size="12" font-weight="bold" text-anchor="start" letter-spacing="0.5">Wind</text>
<text transform="translate(1021 827) scale(0.9 1)" fill="#000" font-size="12" font-weight="bold" text-anchor="end" letter-spacing="0.5">km/h</text>
<text transform="translate(920 843) scale(0.9 1)" fill="#000" font-size="12" font-weight="normal" text-anchor="start">Ø 10 min.</text>
<text transform="translate(1021 843) scale(0.9 1)" fill="#000" font-size="12" font-weight="normal" text-anchor="end">1.5</text>
<text transform="translate(926 859) scale(0.9 1)" fill="#000" font-size="12" font-weight="normal" text-anchor="start">21:20</text>
<text transform="translate(1021 859) scale(0.9 1)" fill="#000" font-size="12" font-weight="normal" text-anchor="end">S-SW 6.4</text>
<text transform="translate(1021 875) scale(0.9 1)" fill="#000" font-size="12" font-weight="normal" text-anchor="end">1.8</text>
<rect x="394" y="341" width="491" height="165" fill="#404040"/>
<rect x="394" y="341" width="490" height="164" fill="#d4d0c8"/>
<rect x="395" y="342" width="489" height="163" fill="#808080"/>
<rect x="395" y="342" width="488" height="162" fill="#ffffff"/>
<rect x="396" y="343" width="487" height="161" fill="#d4d0c8"/>
<rect x="397" y="344" width="485" height="159" fill="#f6f6f6"/>
<defs><linearGradient id="tg" x1="0" x2="1" y1="0" y2="0"><stop offset="0" stop-color="#0a246a"/><stop offset="0.5" stop-color="#5274b6"/><stop offset="1" stop-color="#a6caf0"/></linearGradient></defs>
<rect x="397" y="344" width="485" height="18" fill="url(#tg)"/>
<text x="399" y="357" fill="#fff" font-size="11" font-weight="bold" textLength="138" lengthAdjust="spacing">Gesponserte Verbindung</text>
<text x="477" y="385" fill="#000" font-size="11" textLength="347" lengthAdjust="spacing">Dies war eine kostenlose Sitzung gesponsert von www.teamviewer.com.</text>
<text x="477" y="398" fill="#000" font-size="11" textLength="356" lengthAdjust="spacing">TeamViewer-Sitzungen sind für den privaten Gebrauch komplett kostenlos.</text>
<text x="477" y="424" fill="#000" font-size="11">Wir bedanken uns für Ihre Fairness.</text>
<rect x="407" y="459" width="465" height="2" fill="#e4e4e4"/>
<rect x="578" y="470" width="95" height="23" fill="#404040"/><rect x="578" y="470" width="94" height="22" fill="#ffffff"/><rect x="579" y="471" width="93" height="21" fill="#808080"/><rect x="579" y="471" width="92" height="20" fill="#d4d0c8"/>
<rect x="678" y="470" width="95" height="23" fill="#404040"/><rect x="678" y="470" width="94" height="22" fill="#ffffff"/><rect x="679" y="471" width="93" height="21" fill="#808080"/><rect x="679" y="471" width="92" height="20" fill="#d4d0c8"/>
<rect x="778" y="470" width="95" height="23" fill="#000"/><rect x="779" y="471" width="93" height="21" fill="#404040"/><rect x="779" y="471" width="92" height="20" fill="#ffffff"/><rect x="780" y="472" width="91" height="19" fill="#808080"/><rect x="780" y="472" width="90" height="18" fill="#d4d0c8"/>
<text x="625" y="485" fill="#000" font-size="11" text-anchor="middle">Gefällt mir!</text>
<text x="725.5" y="485" fill="#000" font-size="11" text-anchor="middle">Lizenz kaufen</text>
<text x="825" y="485" fill="#000" font-size="11" text-anchor="middle">OK</text>
<defs><linearGradient id="ig" x1="0" y1="0" x2="0.3" y2="1"><stop offset="0" stop-color="#3fb0f8"/><stop offset="0.5" stop-color="#1a8cf0"/><stop offset="1" stop-color="#0a6ae0"/></linearGradient>
<linearGradient id="eg" x1="0" y1="0" x2="0" y2="1"><stop offset="0" stop-color="#f2f2f2"/><stop offset="1" stop-color="#dedede"/></linearGradient>
<radialGradient id="sg"><stop offset="0" stop-color="#d6d6d6"/><stop offset="1" stop-color="#f5f5f5" stop-opacity="0"/></radialGradient></defs>
<ellipse cx="453" cy="419" rx="12" ry="7" fill="url(#sg)"/>
<path d="M441 378.5 L446 378.8 Q449.5 379.5 449.5 383 L449 422 Q448.8 426.5 444.5 426.8 L441 426 Z" fill="#0650d8"/>
<path d="M410 374.5 L443 378.5 Q446.5 379 446.5 382.5 L445.5 422.5 Q445 426.8 441 426.2 L411 418.5 Q407.8 417.5 407.7 414 L406.3 378 Q406.3 374 410 374.5 Z" fill="url(#ig)"/>
<path d="M443 378.5 Q446.5 379 446.5 382.5 L446.5 384 Q446 380.5 442 380 Z" fill="#40e0ff"/>
<ellipse cx="426" cy="400.5" rx="15.5" ry="18.5" fill="#0a50c0"/>
<ellipse cx="426" cy="400.5" rx="14.6" ry="17.6" fill="url(#eg)"/>
<path d="M413.1 398.4 L422.2 394 L422.2 397.6 L429.4 398.8 L429.4 394.8 L439.7 402.3 L429.4 407.1 L429.4 403.1 L422.2 401.9 L422.2 405.5 Z" fill="#1e88f0" stroke="#0a5ad0" stroke-width="0.6"/>
</svg>
</body></html>
